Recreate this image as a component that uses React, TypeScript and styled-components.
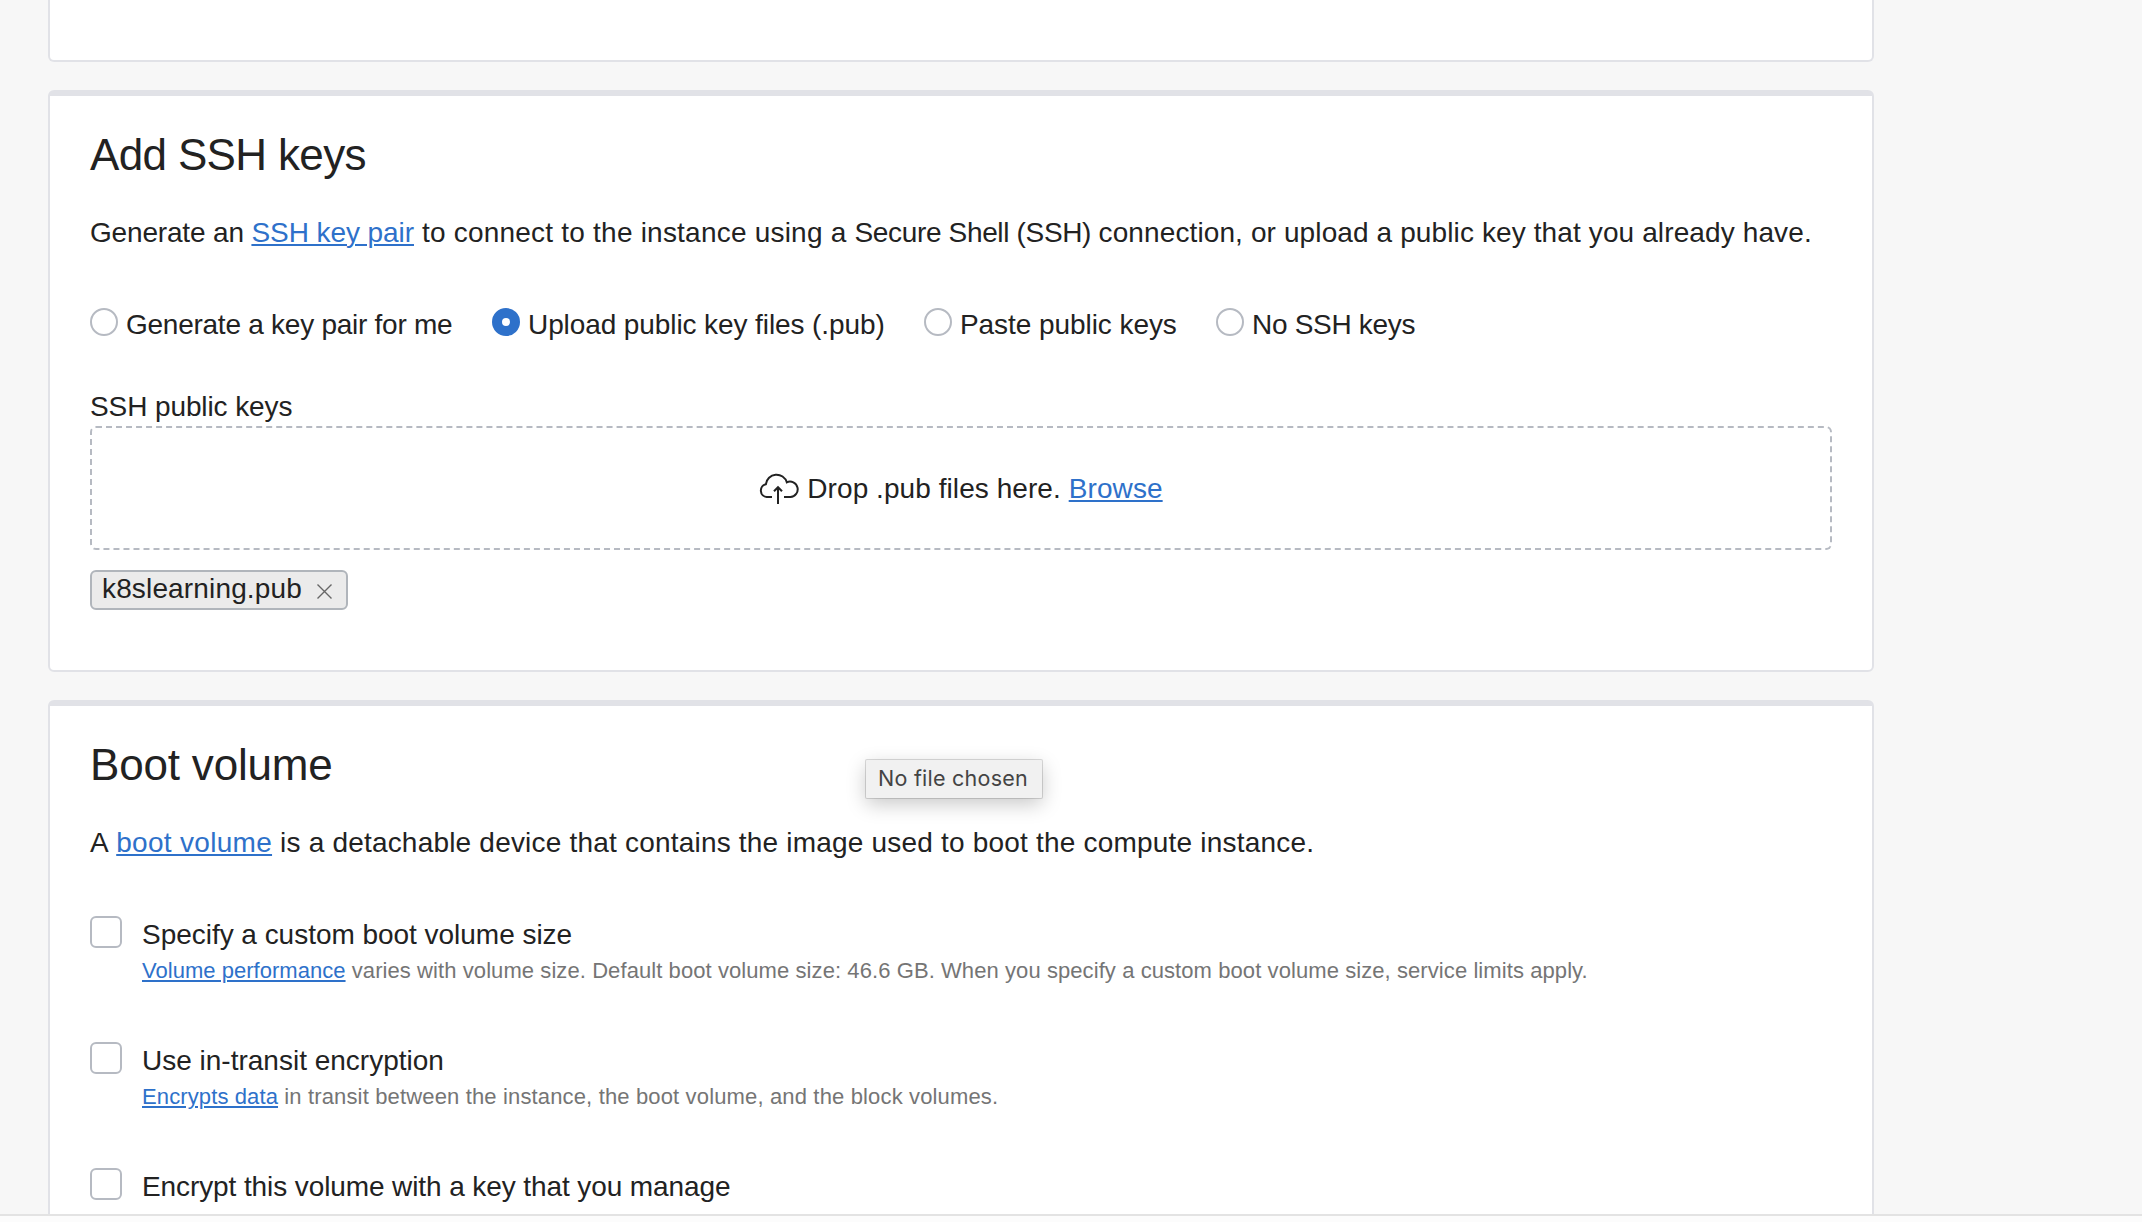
import React, { useState } from "react";
import styled, { createGlobalStyle } from "styled-components";

const Global = createGlobalStyle`
  *, *::before, *::after { box-sizing: border-box; }
  html, body { margin: 0; padding: 0; background: #f7f7f7; }
  body { font-family: "Liberation Sans", Arial, sans-serif; color: #222; overflow: hidden; }
`;

const Page = styled.div`
  position: relative;
  display: flex;
  flex-direction: column;
  height: 1222px;
  overflow: hidden;
`;

const Scroller = styled.main`
  flex: 1;
  min-height: 0;
  overflow: hidden;
  display: flex;
  flex-direction: column;
  gap: 28px;
  padding-left: 48px;
`;

const Card = styled.section<{ $height: number; $untitled?: boolean }>`
  flex: none;
  width: 1826px;
  height: ${(p) => p.$height}px;
  padding: ${(p) => (p.$untitled ? 0 : "24px 40px 0")};
  background: #fff;
  border: 2px solid #e1e2e7;
  border-top: ${(p) => (p.$untitled ? "0" : "6px solid #e1e2e7")};
  border-radius: ${(p) => (p.$untitled ? "0 0 6px 6px" : "6px")};
`;

const Title = styled.h2`
  margin: 0;
  font-size: 44px;
  font-weight: 400;
  line-height: 70px;
`;

const Text = styled.span<{ $track?: number }>`
  letter-spacing: ${(p) => p.$track ?? 0}px;
  white-space: pre;
`;

const Link = styled.a<{ $track?: number }>`
  color: #2e71ca;
  letter-spacing: ${(p) => p.$track ?? 0}px;
  text-decoration: underline;
  text-decoration-thickness: 2px;
  text-underline-offset: 2px;
  cursor: pointer;
`;

const Intro = styled.p`
  margin: 23px 0 0;
  font-size: 28px;
  line-height: 40px;
  white-space: nowrap;
`;

const RadioRow = styled.div`
  display: flex;
  margin-top: 52px;
`;

const RadioLabel = styled.label<{ $width: number }>`
  display: flex;
  gap: 8px;
  width: ${(p) => p.$width}px;
  height: 40px;
  font-size: 28px;
  line-height: 40px;
  white-space: nowrap;
  cursor: pointer;
`;

const RadioDot = styled.span<{ $on: boolean }>`
  flex: none;
  width: 28px;
  height: 28px;
  margin-top: 3px;
  border-radius: 50%;
  border: ${(p) => (p.$on ? "10px solid #2e71ca" : "2px solid #b6bac2")};
  background: #fff;
`;

const FieldLabel = styled.div`
  height: 39px;
  margin-top: 42px;
  font-size: 28px;
  line-height: 40px;
`;

const DropZone = styled.div`
  display: flex;
  align-items: center;
  justify-content: center;
  gap: 8px;
  height: 124px;
  padding-top: 2px;
  border: 2px dashed #b6bac2;
  border-radius: 6px;
  font-size: 28px;
  line-height: 40px;
  white-space: nowrap;
`;

const Chip = styled.div`
  display: flex;
  align-items: center;
  justify-content: space-between;
  width: 258px;
  height: 40px;
  margin-top: 20px;
  padding: 0 14px 2px 10px;
  border: 2px solid #b0b5bb;
  border-radius: 6px;
  background: #ebebeb;
  font-size: 28px;
  line-height: 36px;
`;

const CloseGlyph = styled.svg`
  margin-top: 5px;
`;

const Options = styled.div`
  margin-top: 52px;
`;

const Option = styled.div`
  display: flex;
  gap: 20px;
  height: 126px;
`;

const Check = styled.span`
  flex: none;
  width: 32px;
  height: 32px;
  margin-top: 1px;
  border: 2px solid #b6bac2;
  border-radius: 6px;
  background: #fff;
`;

const OptionLabel = styled.div`
  font-size: 28px;
  line-height: 40px;
`;

const Hint = styled.div`
  font-size: 22px;
  line-height: 32px;
  color: #757575;
  white-space: nowrap;
`;

const Footer = styled.footer`
  flex: none;
  height: 8px;
  border-top: 2px solid #e3e3e3;
  background: #fcfcfc;
`;

const Tooltip = styled.div`
  position: absolute;
  left: 866px;
  top: 760px;
  width: 176px;
  height: 38px;
  display: flex;
  align-items: center;
  padding: 0 0 2px 12px;
  background: #f1f1f1;
  color: #444;
  font-family: Inter, sans-serif;
  font-size: 21.5px;
  border-radius: 1px;
  box-shadow: 0 0 0 1px rgba(0, 0, 0, 0.14), 0 6px 20px rgba(0, 0, 0, 0.22);
`;

const CloudUpload = () => (
  <svg width="40" height="32" viewBox="0 0 40 32" fill="none" stroke="#222" strokeWidth="2">
    <path d="M13 24H7.700A6.500 6.500 0 0 1 6.900 11.200A10.700 10.700 0 0 1 27.800 9.300A7.700 7.700 0 1 1 31.400 24H25" />
    <path d="M19 31V14M15 18.300L19 14.200L23 18.300" />
  </svg>
);

const keySources = [
  { label: "Generate a key pair for me", width: 402, track: -0.255 },
  { label: "Upload public key files (.pub)", width: 432, track: -0.095 },
  { label: "Paste public keys", width: 292, track: -0.065 },
  { label: "No SSH keys", width: 200, track: -0.3 },
];

export default function App() {
  const [source, setSource] = useState(1);
  return (
    <Page>
      <Global />
      <Scroller>
        <Card $height={62} $untitled />
        <Card $height={582}>
          <Title><Text $track={-0.65}>Add SSH keys</Text></Title>
          <Intro>
            <Text $track={-0.17}>{"Generate an "}</Text>
            <Link $track={-0.07}>SSH key pair</Link>
            <Text $track={0.215}>{" to connect to the instance using a "}</Text>
            <Text $track={-0.34}>{"Secure Shell (SSH) "}</Text>
            <Text $track={0.115}>{"connection, or upload a public key that you already have."}</Text>
          </Intro>
          <RadioRow>
            {keySources.map((s, i) => (
              <RadioLabel key={s.label} $width={s.width} onClick={() => setSource(i)}>
                <RadioDot $on={source === i} />
                <Text $track={s.track}>{s.label}</Text>
              </RadioLabel>
            ))}
          </RadioRow>
          <FieldLabel><Text $track={-0.1}>SSH public keys</Text></FieldLabel>
          <DropZone>
            <CloudUpload />
            <span>
              <Text $track={0.065}>{"Drop .pub files here. "}</Text>
              <Link $track={0.1}>Browse</Link>
            </span>
          </DropZone>
          <Chip>
            <Text $track={0.15}>k8slearning.pub</Text>
            <CloseGlyph width="15" height="15" viewBox="0 0 15 15" fill="none" stroke="#666" strokeWidth="1.4">
              <path d="M0.500 0.500L14.500 14.500M14.500 0.500L0.500 14.500" />
            </CloseGlyph>
          </Chip>
        </Card>
        <Card $height={560}>
          <Title><Text $track={-0.18}>Boot volume</Text></Title>
          <Intro>
            <Text $track={0.64}>{"A "}</Text>
            <Link $track={0.3}>boot volume</Link>
            <Text $track={0.2}>{" is a detachable device that contains the image used to boot the compute instance."}</Text>
          </Intro>
          <Options>
            <Option>
              <Check />
              <div>
                <OptionLabel><Text $track={-0.03}>Specify a custom boot volume size</Text></OptionLabel>
                <Hint>
                  <Link $track={0.03}>Volume performance</Link>
                  <Text $track={0.08}>{" varies with volume size. Default boot volume size: 46.6 GB. When you specify a custom boot volume size, service limits apply."}</Text>
                </Hint>
              </div>
            </Option>
            <Option>
              <Check />
              <div>
                <OptionLabel><Text>Use in-transit encryption</Text></OptionLabel>
                <Hint>
                  <Link $track={0.115}>Encrypts data</Link>
                  <Text $track={0.15}>{" in transit between the instance, the boot volume, and the block volumes."}</Text>
                </Hint>
              </div>
            </Option>
            <Option>
              <Check />
              <div>
                <OptionLabel><Text $track={-0.1}>Encrypt this volume with a key that you manage</Text></OptionLabel>
              </div>
            </Option>
          </Options>
        </Card>
      </Scroller>
      <Footer />
      <Tooltip><Text $track={0.25}>No file chosen</Text></Tooltip>
    </Page>
  );
}
